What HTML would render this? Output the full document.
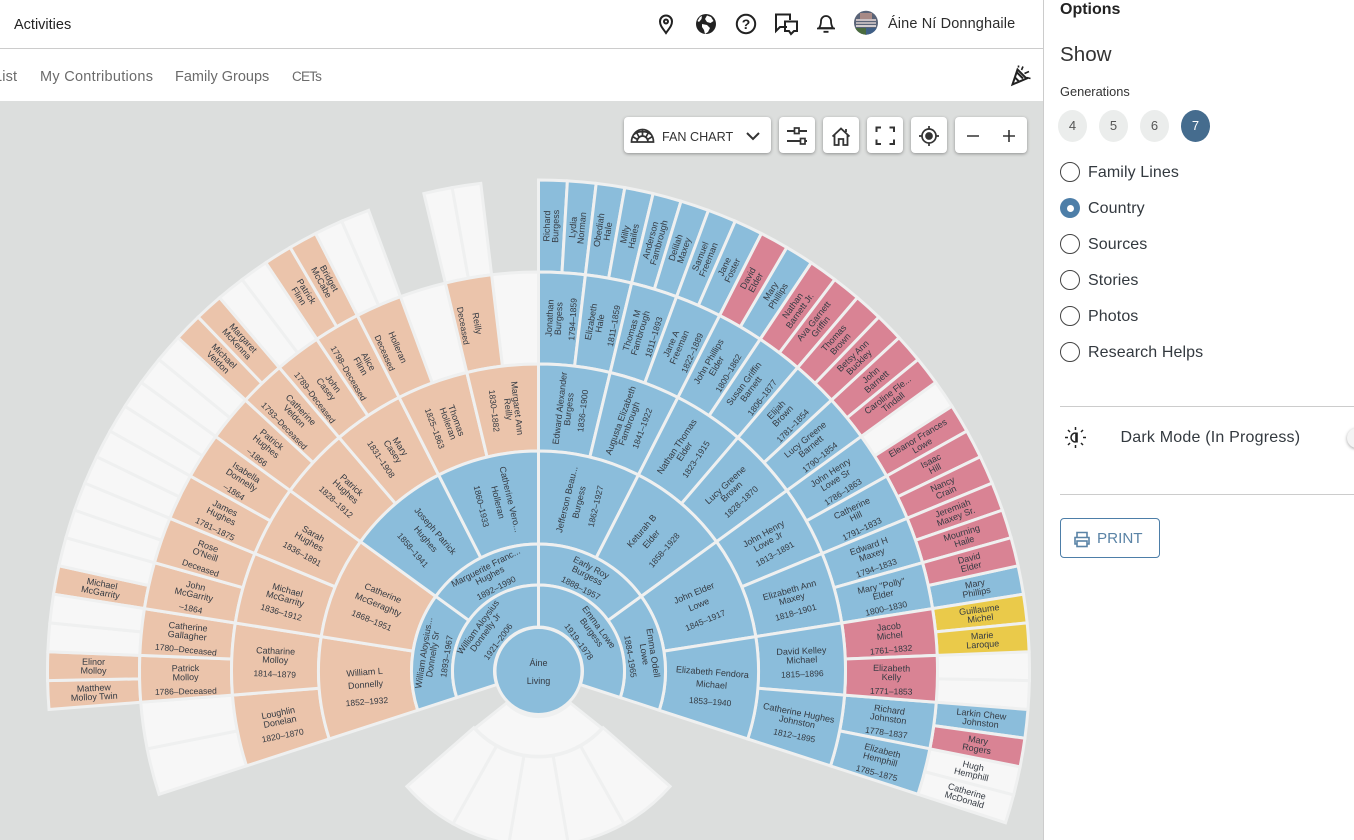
<!DOCTYPE html>
<html lang="en">
<head>
<meta charset="utf-8">
<title>Fan Chart</title>
<style>
html,body{margin:0;padding:0;width:1354px;height:840px;overflow:hidden;background:#fff;font-family:"Liberation Sans",sans-serif;color:#333}
.a{position:absolute;white-space:nowrap}
#chart{position:absolute;left:0;top:101px;width:1043px;height:739px;background:#dcdedd}
#fan{position:absolute;left:0;top:0}
#fan text{font-family:"Liberation Sans",sans-serif;font-size:9px;text-anchor:middle;fill:#343a42}
#fan .d{font-size:8.5px}
.b{fill:#8bbddb}.p{fill:#ebc4ab}.r{fill:#d98394}.y{fill:#eaca4a}.w{fill:#f7f7f7}
.btn{position:absolute;top:117px;height:36px;background:#fff;border-radius:4px;box-shadow:0 1px 3px rgba(0,0,0,.35)}
.radio{position:absolute;left:1060px;width:18px;height:18px;border:1.3px solid #444;border-radius:50%;background:#fff}
.rl{position:absolute;left:1088px;font-size:16px;letter-spacing:.1px;color:#33393f;white-space:nowrap}
.gen{position:absolute;top:110px;width:29px;height:32px;border-radius:50%;background:#ebedec;color:#555;font-size:13px;line-height:32px;text-align:center}
</style>
</head>
<body>
<!-- header -->
<div class="a" style="left:14px;top:17px;font-size:14.5px;color:#222">Activities</div>
<div class="a" style="left:0;top:48px;width:1043px;height:1px;background:#ccc"></div>
<div class="a" style="left:-6px;top:69px;font-size:14.5px;letter-spacing:.15px;color:#6b6b6b">List</div>
<div class="a" style="left:40px;top:69px;font-size:14.5px;letter-spacing:.28px;color:#6b6b6b">My Contributions</div>
<div class="a" style="left:175px;top:69px;font-size:14.5px;color:#6b6b6b">Family Groups</div>
<div class="a" style="left:292px;top:69px;font-size:13.5px;letter-spacing:-.8px;color:#6b6b6b">CETs</div>
<div class="a" style="left:888px;top:16px;font-size:14.5px;letter-spacing:.13px;color:#2c2c2c">Áine Ní Donnghaile</div>

<!-- chart area -->
<div id="chart"></div>
<svg id="fan" width="1043" height="840" viewBox="0 0 1043 840" xmlns="http://www.w3.org/2000/svg">
<rect x="0" y="101" width="1043" height="739" fill="#dcdedd"/>
<defs>
<path id="g1" d="M-35.6,-25.86L-69.57,-50.55A86 86 0 0 1 69.57,-50.55L35.6,-25.86A44 44 0 0 0 -35.6,-25.86Z"/>
<path id="g2" d="M-39.04,-76.63L-57.66,-113.16A127 127 0 0 1 57.66,-113.16L39.04,-76.63A86 86 0 0 0 -39.04,-76.63Z"/>
<path id="g3" d="M-29.65,-123.49L-51.36,-213.92A220 220 0 0 1 51.36,-213.92L29.65,-123.49A127 127 0 0 0 -29.65,-123.49Z"/>
<path id="g4" d="M-25.86,-218.48L-36.08,-304.87A307 307 0 0 1 36.08,-304.87L25.86,-218.48A220 220 0 0 0 -25.86,-218.48Z"/>
<path id="g5" d="M-18.07,-306.47L-23.49,-398.31A399 399 0 0 1 23.49,-398.31L18.07,-306.47A307 307 0 0 0 -18.07,-306.47Z"/>
<path id="g6" d="M-11.75,-398.83L-14.46,-490.79A491 491 0 0 1 14.46,-490.79L11.75,-398.83A399 399 0 0 0 -11.75,-398.83Z"/>
<path id="gb" d="M-14.56,-84.76L-29.64,-172.47A175 175 0 0 1 29.64,-172.47L14.56,-84.76A86 86 0 0 0 -14.56,-84.76Z"/>
</defs>
<g transform="translate(538.5,671)">
<g stroke="#eff0f0" stroke-width="3" stroke-linejoin="miter">
<!-- bottom blank fan -->
<g class="w">
<use href="#gb" transform="rotate(141)"/><use href="#gb" transform="rotate(160.5)"/><use href="#gb" transform="rotate(180)"/><use href="#gb" transform="rotate(199.5)"/><use href="#gb" transform="rotate(219)"/>
<path d="M-31.8,32L-63.5,57.3A86 86 0 0 0 63.5,57.3L31.8,32A44 44 0 0 1 -31.8,32Z"/>
</g>
<!-- generation 6 -->
<g class="p">
<use href="#g6" transform="rotate(-92.8125)"/><use href="#g6" transform="rotate(-89.4375)"/><use href="#g6" transform="rotate(-79.3125)"/><use href="#g6" transform="rotate(-45.5625)"/><use href="#g6" transform="rotate(-42.1875)"/><use href="#g6" transform="rotate(-32.0625)"/><use href="#g6" transform="rotate(-28.6875)"/>
</g>
<g class="w">
<use href="#g6" transform="rotate(-86.0625)"/><use href="#g6" transform="rotate(-82.6875)"/><use href="#g6" transform="rotate(-75.9375)"/><use href="#g6" transform="rotate(-72.5625)"/><use href="#g6" transform="rotate(-69.1875)"/><use href="#g6" transform="rotate(-65.8125)"/><use href="#g6" transform="rotate(-62.4375)"/><use href="#g6" transform="rotate(-59.0625)"/><use href="#g6" transform="rotate(-55.6875)"/><use href="#g6" transform="rotate(-52.3125)"/><use href="#g6" transform="rotate(-48.9375)"/><use href="#g6" transform="rotate(-38.8125)"/><use href="#g6" transform="rotate(-35.4375)"/><use href="#g6" transform="rotate(-25.3125)"/><use href="#g6" transform="rotate(-21.9375)"/><use href="#g6" transform="rotate(-11.8125)"/><use href="#g6" transform="rotate(-8.4375)"/>
<use href="#g6" transform="rotate(55.6875)"/><use href="#g6" transform="rotate(89.4375)"/><use href="#g6" transform="rotate(92.8125)"/><use href="#g6" transform="rotate(102.9375)"/><use href="#g6" transform="rotate(106.3125)"/>
</g>
<g class="b">
<use href="#g6" transform="rotate(1.6875)"/><use href="#g6" transform="rotate(5.0625)"/><use href="#g6" transform="rotate(8.4375)"/><use href="#g6" transform="rotate(11.8125)"/><use href="#g6" transform="rotate(15.1875)"/><use href="#g6" transform="rotate(18.5625)"/><use href="#g6" transform="rotate(21.9375)"/><use href="#g6" transform="rotate(25.3125)"/><use href="#g6" transform="rotate(32.0625)"/><use href="#g6" transform="rotate(79.3125)"/><use href="#g6" transform="rotate(96.1875)"/>
</g>
<g class="r">
<use href="#g6" transform="rotate(28.6875)"/><use href="#g6" transform="rotate(35.4375)"/><use href="#g6" transform="rotate(38.8125)"/><use href="#g6" transform="rotate(42.1875)"/><use href="#g6" transform="rotate(45.5625)"/><use href="#g6" transform="rotate(48.9375)"/><use href="#g6" transform="rotate(52.3125)"/><use href="#g6" transform="rotate(59.0625)"/><use href="#g6" transform="rotate(62.4375)"/><use href="#g6" transform="rotate(65.8125)"/><use href="#g6" transform="rotate(69.1875)"/><use href="#g6" transform="rotate(72.5625)"/><use href="#g6" transform="rotate(75.9375)"/><use href="#g6" transform="rotate(99.5625)"/>
</g>
<g class="y"><use href="#g6" transform="rotate(82.6875)"/><use href="#g6" transform="rotate(86.0625)"/></g>
<!-- generation 5 -->
<g class="w"><use href="#g5" transform="rotate(-104.625)"/><use href="#g5" transform="rotate(-97.875)"/><use href="#g5" transform="rotate(-16.875)"/><use href="#g5" transform="rotate(-3.375)"/></g>
<g class="p">
<use href="#g5" transform="rotate(-91.125)"/><use href="#g5" transform="rotate(-84.375)"/><use href="#g5" transform="rotate(-77.625)"/><use href="#g5" transform="rotate(-70.875)"/><use href="#g5" transform="rotate(-64.125)"/><use href="#g5" transform="rotate(-57.375)"/><use href="#g5" transform="rotate(-50.625)"/><use href="#g5" transform="rotate(-43.875)"/><use href="#g5" transform="rotate(-37.125)"/><use href="#g5" transform="rotate(-30.375)"/><use href="#g5" transform="rotate(-23.625)"/><use href="#g5" transform="rotate(-10.125)"/>
</g>
<g class="b">
<use href="#g5" transform="rotate(3.375)"/><use href="#g5" transform="rotate(10.125)"/><use href="#g5" transform="rotate(16.875)"/><use href="#g5" transform="rotate(23.625)"/><use href="#g5" transform="rotate(30.375)"/><use href="#g5" transform="rotate(37.125)"/><use href="#g5" transform="rotate(43.875)"/><use href="#g5" transform="rotate(50.625)"/><use href="#g5" transform="rotate(57.375)"/><use href="#g5" transform="rotate(64.125)"/><use href="#g5" transform="rotate(70.875)"/><use href="#g5" transform="rotate(77.625)"/><use href="#g5" transform="rotate(97.875)"/><use href="#g5" transform="rotate(104.625)"/>
</g>
<g class="r"><use href="#g5" transform="rotate(84.375)"/><use href="#g5" transform="rotate(91.125)"/></g>
<!-- generation 4 -->
<g class="p">
<use href="#g4" transform="rotate(-101.25)"/><use href="#g4" transform="rotate(-87.75)"/><use href="#g4" transform="rotate(-74.25)"/><use href="#g4" transform="rotate(-60.75)"/><use href="#g4" transform="rotate(-47.25)"/><use href="#g4" transform="rotate(-33.75)"/><use href="#g4" transform="rotate(-20.25)"/><use href="#g4" transform="rotate(-6.75)"/>
</g>
<g class="b">
<use href="#g4" transform="rotate(6.75)"/><use href="#g4" transform="rotate(20.25)"/><use href="#g4" transform="rotate(33.75)"/><use href="#g4" transform="rotate(47.25)"/><use href="#g4" transform="rotate(60.75)"/><use href="#g4" transform="rotate(74.25)"/><use href="#g4" transform="rotate(87.75)"/><use href="#g4" transform="rotate(101.25)"/>
</g>
<!-- generation 3 -->
<g class="p"><use href="#g3" transform="rotate(-94.5)"/><use href="#g3" transform="rotate(-67.5)"/></g>
<g class="b"><use href="#g3" transform="rotate(-40.5)"/><use href="#g3" transform="rotate(-13.5)"/><use href="#g3" transform="rotate(13.5)"/><use href="#g3" transform="rotate(40.5)"/><use href="#g3" transform="rotate(67.5)"/><use href="#g3" transform="rotate(94.5)"/></g>
<!-- generations 2 and 1 -->
<g class="b">
<use href="#g2" transform="rotate(-81)"/><use href="#g2" transform="rotate(-27)"/><use href="#g2" transform="rotate(27)"/><use href="#g2" transform="rotate(81)"/>
<use href="#g1" transform="rotate(-54)"/><use href="#g1" transform="rotate(54)"/>
<circle r="43.5"/>
</g>
</g>
<!-- text: center -->
<text y="-5">Áine</text><text y="13">Living</text>
<!-- gen 1 -->
<text transform="rotate(-54) translate(0,-65)"><tspan x="0" y="-6.7">William Aloysius</tspan><tspan x="0" y="2.3">Donnelly Jr</tspan><tspan x="0" y="18" class="d">1921–2006</tspan></text>
<text transform="rotate(54) translate(0,-65)"><tspan x="0" y="-6.7">Emma Lowe</tspan><tspan x="0" y="2.3">Burgess</tspan><tspan x="0" y="18" class="d">1919–1978</tspan></text>
<!-- gen 2 -->
<text transform="rotate(-81) translate(0,-106.5)"><tspan x="0" y="-6.7">William Aloysius...</tspan><tspan x="0" y="2.3">Donnelly Sr</tspan><tspan x="0" y="16.3" class="d">1893–1967</tspan></text>
<text transform="rotate(-27) translate(0,-106.5)"><tspan x="0" y="-6.7">Marguerite Franc...</tspan><tspan x="0" y="2.3">Hughes</tspan><tspan x="0" y="16.3" class="d">1892–1990</tspan></text>
<text transform="rotate(27) translate(0,-106.5)"><tspan x="0" y="-6.7">Early Roy</tspan><tspan x="0" y="2.3">Burgess</tspan><tspan x="0" y="16.3" class="d">1888–1957</tspan></text>
<text transform="rotate(81) translate(0,-106.5)"><tspan x="0" y="-6.7">Emma Odell</tspan><tspan x="0" y="2.3">Lowe</tspan><tspan x="0" y="16.3" class="d">1884–1965</tspan></text>
<!-- gen 3 -->
<text transform="rotate(-94.5) translate(0,-173.5) rotate(90)"><tspan x="0" y="-9.5">William L</tspan><tspan x="0" y="3">Donnelly</tspan><tspan x="0" y="20" class="d">1852–1932</tspan></text>
<text transform="rotate(-67.5) translate(0,-173.5) rotate(90)"><tspan x="0" y="-9.5">Catherine</tspan><tspan x="0" y="3">McGeraghty</tspan><tspan x="0" y="20" class="d">1868–1951</tspan></text>
<text transform="rotate(-40.5) translate(0,-173.5) rotate(90)"><tspan x="0" y="-9.5">Joseph Patrick</tspan><tspan x="0" y="3">Hughes</tspan><tspan x="0" y="20" class="d">1858–1941</tspan></text>
<text transform="rotate(-13.5) translate(0,-173.5) rotate(90)"><tspan x="0" y="-9.5">Catherine Vero...</tspan><tspan x="0" y="3">Holleran</tspan><tspan x="0" y="20" class="d">1860–1933</tspan></text>
<text transform="rotate(13.5) translate(0,-173.5) rotate(-90)"><tspan x="0" y="-9.5">Jefferson Beau...</tspan><tspan x="0" y="3">Burgess</tspan><tspan x="0" y="20" class="d">1862–1927</tspan></text>
<text transform="rotate(40.5) translate(0,-173.5) rotate(-90)"><tspan x="0" y="-9.5">Keturah B</tspan><tspan x="0" y="3">Elder</tspan><tspan x="0" y="20" class="d">1858–1928</tspan></text>
<text transform="rotate(67.5) translate(0,-173.5) rotate(-90)"><tspan x="0" y="-9.5">John Elder</tspan><tspan x="0" y="3">Lowe</tspan><tspan x="0" y="20" class="d">1845–1917</tspan></text>
<text transform="rotate(94.5) translate(0,-173.5) rotate(-90)"><tspan x="0" y="-9.5">Elizabeth Fendora</tspan><tspan x="0" y="3">Michael</tspan><tspan x="0" y="20" class="d">1853–1940</tspan></text>
<!-- gen 4 -->
<text transform="rotate(-101.25) translate(0,-263.5) rotate(90)"><tspan x="0" y="-6.7">Loughlin</tspan><tspan x="0" y="2.3">Donelan</tspan><tspan x="0" y="16.3" class="d">1820–1870</tspan></text>
<text transform="rotate(-87.75) translate(0,-263.5) rotate(90)"><tspan x="0" y="-6.7">Catharine</tspan><tspan x="0" y="2.3">Molloy</tspan><tspan x="0" y="16.3" class="d">1814–1879</tspan></text>
<text transform="rotate(-74.25) translate(0,-263.5) rotate(90)"><tspan x="0" y="-6.7">Michael</tspan><tspan x="0" y="2.3">McGarrity</tspan><tspan x="0" y="16.3" class="d">1836–1912</tspan></text>
<text transform="rotate(-60.75) translate(0,-263.5) rotate(90)"><tspan x="0" y="-6.7">Sarah</tspan><tspan x="0" y="2.3">Hughes</tspan><tspan x="0" y="16.3" class="d">1836–1891</tspan></text>
<text transform="rotate(-47.25) translate(0,-263.5) rotate(90)"><tspan x="0" y="-6.7">Patrick</tspan><tspan x="0" y="2.3">Hughes</tspan><tspan x="0" y="16.3" class="d">1828–1912</tspan></text>
<text transform="rotate(-33.75) translate(0,-263.5) rotate(90)"><tspan x="0" y="-6.7">Mary</tspan><tspan x="0" y="2.3">Casey</tspan><tspan x="0" y="16.3" class="d">1831–1908</tspan></text>
<text transform="rotate(-20.25) translate(0,-263.5) rotate(90)"><tspan x="0" y="-6.7">Thomas</tspan><tspan x="0" y="2.3">Holleran</tspan><tspan x="0" y="16.3" class="d">1825–1863</tspan></text>
<text transform="rotate(-6.75) translate(0,-263.5) rotate(90)"><tspan x="0" y="-6.7">Margaret Ann</tspan><tspan x="0" y="2.3">Reilly</tspan><tspan x="0" y="16.3" class="d">1830–1882</tspan></text>
<text transform="rotate(6.75) translate(0,-263.5) rotate(-90)"><tspan x="0" y="-6.7">Edward Alexander</tspan><tspan x="0" y="2.3">Burgess</tspan><tspan x="0" y="16.3" class="d">1836–1900</tspan></text>
<text transform="rotate(20.25) translate(0,-263.5) rotate(-90)"><tspan x="0" y="-6.7">Augusta Elizabeth</tspan><tspan x="0" y="2.3">Fambrough</tspan><tspan x="0" y="16.3" class="d">1841–1922</tspan></text>
<text transform="rotate(33.75) translate(0,-263.5) rotate(-90)"><tspan x="0" y="-6.7">Nathan Thomas</tspan><tspan x="0" y="2.3">Elder</tspan><tspan x="0" y="16.3" class="d">1823–1915</tspan></text>
<text transform="rotate(47.25) translate(0,-263.5) rotate(-90)"><tspan x="0" y="-6.7">Lucy Greene</tspan><tspan x="0" y="2.3">Brown</tspan><tspan x="0" y="16.3" class="d">1828–1870</tspan></text>
<text transform="rotate(60.75) translate(0,-263.5) rotate(-90)"><tspan x="0" y="-6.7">John Henry</tspan><tspan x="0" y="2.3">Lowe Jr</tspan><tspan x="0" y="16.3" class="d">1813–1891</tspan></text>
<text transform="rotate(74.25) translate(0,-263.5) rotate(-90)"><tspan x="0" y="-6.7">Elizabeth Ann</tspan><tspan x="0" y="2.3">Maxey</tspan><tspan x="0" y="16.3" class="d">1818–1901</tspan></text>
<text transform="rotate(87.75) translate(0,-263.5) rotate(-90)"><tspan x="0" y="-6.7">David Kelley</tspan><tspan x="0" y="2.3">Michael</tspan><tspan x="0" y="16.3" class="d">1815–1896</tspan></text>
<text transform="rotate(101.25) translate(0,-263.5) rotate(-90)"><tspan x="0" y="-6.7">Catherine Hughes</tspan><tspan x="0" y="2.3">Johnston</tspan><tspan x="0" y="16.3" class="d">1812–1895</tspan></text>
<!-- gen 5 -->
<text transform="rotate(-91.125) translate(0,-353) rotate(90)"><tspan x="0" y="-6.7">Patrick</tspan><tspan x="0" y="2.3">Molloy</tspan><tspan x="0" y="16.3" class="d">1786–Deceased</tspan></text>
<text transform="rotate(-84.375) translate(0,-353) rotate(90)"><tspan x="0" y="-6.7">Catherine</tspan><tspan x="0" y="2.3">Gallagher</tspan><tspan x="0" y="16.3" class="d">1780–Deceased</tspan></text>
<text transform="rotate(-77.625) translate(0,-353) rotate(90)"><tspan x="0" y="-6.7">John</tspan><tspan x="0" y="2.3">McGarrity</tspan><tspan x="0" y="16.3" class="d">–1864</tspan></text>
<text transform="rotate(-70.875) translate(0,-353) rotate(90)"><tspan x="0" y="-6.7">Rose</tspan><tspan x="0" y="2.3">O'Neill</tspan><tspan x="0" y="16.3" class="d">Deceased</tspan></text>
<text transform="rotate(-64.125) translate(0,-353) rotate(90)"><tspan x="0" y="-6.7">James</tspan><tspan x="0" y="2.3">Hughes</tspan><tspan x="0" y="16.3" class="d">1781–1875</tspan></text>
<text transform="rotate(-57.375) translate(0,-353) rotate(90)"><tspan x="0" y="-6.7">Isabella</tspan><tspan x="0" y="2.3">Donnelly</tspan><tspan x="0" y="16.3" class="d">–1864</tspan></text>
<text transform="rotate(-50.625) translate(0,-353) rotate(90)"><tspan x="0" y="-6.7">Patrick</tspan><tspan x="0" y="2.3">Hughes</tspan><tspan x="0" y="16.3" class="d">–1866</tspan></text>
<text transform="rotate(-43.875) translate(0,-353) rotate(90)"><tspan x="0" y="-6.7">Catherine</tspan><tspan x="0" y="2.3">Veldon</tspan><tspan x="0" y="16.3" class="d">1793–Deceased</tspan></text>
<text transform="rotate(-37.125) translate(0,-353) rotate(90)"><tspan x="0" y="-6.7">John</tspan><tspan x="0" y="2.3">Casey</tspan><tspan x="0" y="16.3" class="d">1789–Deceased</tspan></text>
<text transform="rotate(-30.375) translate(0,-353) rotate(90)"><tspan x="0" y="-6.7">Alice</tspan><tspan x="0" y="2.3">Flinn</tspan><tspan x="0" y="16.3" class="d">1798–Deceased</tspan></text>
<text transform="rotate(-23.625) translate(0,-353) rotate(90)"><tspan x="0" y="2.3">Holleran</tspan><tspan x="0" y="16.3" class="d">Deceased</tspan></text>
<text transform="rotate(-10.125) translate(0,-353) rotate(90)"><tspan x="0" y="2.3">Reilly</tspan><tspan x="0" y="16.3" class="d">Deceased</tspan></text>
<text transform="rotate(3.375) translate(0,-353) rotate(-90)"><tspan x="0" y="-6.7">Jonathan</tspan><tspan x="0" y="2.3">Burgess</tspan><tspan x="0" y="16.3" class="d">1794–1859</tspan></text>
<text transform="rotate(10.125) translate(0,-353) rotate(-90)"><tspan x="0" y="-6.7">Elizabeth</tspan><tspan x="0" y="2.3">Hale</tspan><tspan x="0" y="16.3" class="d">1811–1859</tspan></text>
<text transform="rotate(16.875) translate(0,-353) rotate(-90)"><tspan x="0" y="-6.7">Thomas M</tspan><tspan x="0" y="2.3">Fambrough</tspan><tspan x="0" y="16.3" class="d">1811–1893</tspan></text>
<text transform="rotate(23.625) translate(0,-353) rotate(-90)"><tspan x="0" y="-6.7">Jane A</tspan><tspan x="0" y="2.3">Freeman</tspan><tspan x="0" y="16.3" class="d">1822–1889</tspan></text>
<text transform="rotate(30.375) translate(0,-353) rotate(-90)"><tspan x="0" y="-6.7">John Phillips</tspan><tspan x="0" y="2.3">Elder</tspan><tspan x="0" y="16.3" class="d">1800–1862</tspan></text>
<text transform="rotate(37.125) translate(0,-353) rotate(-90)"><tspan x="0" y="-6.7">Susan Griffin</tspan><tspan x="0" y="2.3">Barnett</tspan><tspan x="0" y="16.3" class="d">1806–1877</tspan></text>
<text transform="rotate(43.875) translate(0,-353) rotate(-90)"><tspan x="0" y="-6.7">Elijah</tspan><tspan x="0" y="2.3">Brown</tspan><tspan x="0" y="16.3" class="d">1781–1854</tspan></text>
<text transform="rotate(50.625) translate(0,-353) rotate(-90)"><tspan x="0" y="-6.7">Lucy Greene</tspan><tspan x="0" y="2.3">Barnett</tspan><tspan x="0" y="16.3" class="d">1790–1854</tspan></text>
<text transform="rotate(57.375) translate(0,-353) rotate(-90)"><tspan x="0" y="-6.7">John Henry</tspan><tspan x="0" y="2.3">Lowe Sr</tspan><tspan x="0" y="16.3" class="d">1786–1863</tspan></text>
<text transform="rotate(64.125) translate(0,-353) rotate(-90)"><tspan x="0" y="-6.7">Catherine</tspan><tspan x="0" y="2.3">Hill</tspan><tspan x="0" y="16.3" class="d">1791–1833</tspan></text>
<text transform="rotate(70.875) translate(0,-353) rotate(-90)"><tspan x="0" y="-6.7">Edward H</tspan><tspan x="0" y="2.3">Maxey</tspan><tspan x="0" y="16.3" class="d">1794–1833</tspan></text>
<text transform="rotate(77.625) translate(0,-353) rotate(-90)"><tspan x="0" y="-6.7">Mary "Polly"</tspan><tspan x="0" y="2.3">Elder</tspan><tspan x="0" y="16.3" class="d">1800–1830</tspan></text>
<text transform="rotate(84.375) translate(0,-353) rotate(-90)"><tspan x="0" y="-6.7">Jacob</tspan><tspan x="0" y="2.3">Michel</tspan><tspan x="0" y="16.3" class="d">1761–1832</tspan></text>
<text transform="rotate(91.125) translate(0,-353) rotate(-90)"><tspan x="0" y="-6.7">Elizabeth</tspan><tspan x="0" y="2.3">Kelly</tspan><tspan x="0" y="16.3" class="d">1771–1853</tspan></text>
<text transform="rotate(97.875) translate(0,-353) rotate(-90)"><tspan x="0" y="-6.7">Richard</tspan><tspan x="0" y="2.3">Johnston</tspan><tspan x="0" y="16.3" class="d">1778–1837</tspan></text>
<text transform="rotate(104.625) translate(0,-353) rotate(-90)"><tspan x="0" y="-6.7">Elizabeth</tspan><tspan x="0" y="2.3">Hemphill</tspan><tspan x="0" y="16.3" class="d">1785–1875</tspan></text>
<!-- gen 6 -->
<text transform="rotate(-92.8125) translate(0,-445) rotate(90)"><tspan x="0" y="-1.8">Matthew</tspan><tspan x="0" y="7">Molloy Twin</tspan></text>
<text transform="rotate(-89.4375) translate(0,-445) rotate(90)"><tspan x="0" y="-1.8">Elinor</tspan><tspan x="0" y="7">Molloy</tspan></text>
<text transform="rotate(-79.3125) translate(0,-445) rotate(90)"><tspan x="0" y="-1.8">Michael</tspan><tspan x="0" y="7">McGarrity</tspan></text>
<text transform="rotate(-45.5625) translate(0,-445) rotate(90)"><tspan x="0" y="-1.8">Michael</tspan><tspan x="0" y="7">Veldon</tspan></text>
<text transform="rotate(-42.1875) translate(0,-445) rotate(90)"><tspan x="0" y="-1.8">Margaret</tspan><tspan x="0" y="7">McKenna</tspan></text>
<text transform="rotate(-32.0625) translate(0,-445) rotate(90)"><tspan x="0" y="-1.8">Patrick</tspan><tspan x="0" y="7">Flinn</tspan></text>
<text transform="rotate(-28.6875) translate(0,-445) rotate(90)"><tspan x="0" y="-1.8">Bridget</tspan><tspan x="0" y="7">McCabe</tspan></text>
<text transform="rotate(1.6875) translate(0,-445) rotate(-90)"><tspan x="0" y="-1.8">Richard</tspan><tspan x="0" y="7">Burgess</tspan></text>
<text transform="rotate(5.0625) translate(0,-445) rotate(-90)"><tspan x="0" y="-1.8">Lydia</tspan><tspan x="0" y="7">Norman</tspan></text>
<text transform="rotate(8.4375) translate(0,-445) rotate(-90)"><tspan x="0" y="-1.8">Obediah</tspan><tspan x="0" y="7">Hale</tspan></text>
<text transform="rotate(11.8125) translate(0,-445) rotate(-90)"><tspan x="0" y="-1.8">Milly</tspan><tspan x="0" y="7">Hailes</tspan></text>
<text transform="rotate(15.1875) translate(0,-445) rotate(-90)"><tspan x="0" y="-1.8">Anderson</tspan><tspan x="0" y="7">Fambrough</tspan></text>
<text transform="rotate(18.5625) translate(0,-445) rotate(-90)"><tspan x="0" y="-1.8">Delilah</tspan><tspan x="0" y="7">Maxey</tspan></text>
<text transform="rotate(21.9375) translate(0,-445) rotate(-90)"><tspan x="0" y="-1.8">Samuel</tspan><tspan x="0" y="7">Freeman</tspan></text>
<text transform="rotate(25.3125) translate(0,-445) rotate(-90)"><tspan x="0" y="-1.8">Jane</tspan><tspan x="0" y="7">Foster</tspan></text>
<text transform="rotate(28.6875) translate(0,-445) rotate(-90)"><tspan x="0" y="-1.8">David</tspan><tspan x="0" y="7">Elder</tspan></text>
<text transform="rotate(32.0625) translate(0,-445) rotate(-90)"><tspan x="0" y="-1.8">Mary</tspan><tspan x="0" y="7">Phillips</tspan></text>
<text transform="rotate(35.4375) translate(0,-445) rotate(-90)"><tspan x="0" y="-1.8">Nathan</tspan><tspan x="0" y="7">Barnett Jr.</tspan></text>
<text transform="rotate(38.8125) translate(0,-445) rotate(-90)"><tspan x="0" y="-1.8">Ava Garnett</tspan><tspan x="0" y="7">Griffin</tspan></text>
<text transform="rotate(42.1875) translate(0,-445) rotate(-90)"><tspan x="0" y="-1.8">Thomas</tspan><tspan x="0" y="7">Brown</tspan></text>
<text transform="rotate(45.5625) translate(0,-445) rotate(-90)"><tspan x="0" y="-1.8">Betsy Ann</tspan><tspan x="0" y="7">Buckley</tspan></text>
<text transform="rotate(48.9375) translate(0,-445) rotate(-90)"><tspan x="0" y="-1.8">John</tspan><tspan x="0" y="7">Barnett</tspan></text>
<text transform="rotate(52.3125) translate(0,-445) rotate(-90)"><tspan x="0" y="-1.8">Caroline Fle...</tspan><tspan x="0" y="7">Tindall</tspan></text>
<text transform="rotate(59.0625) translate(0,-445) rotate(-90)"><tspan x="0" y="-1.8">Eleanor Frances</tspan><tspan x="0" y="7">Lowe</tspan></text>
<text transform="rotate(62.4375) translate(0,-445) rotate(-90)"><tspan x="0" y="-1.8">Isaac</tspan><tspan x="0" y="7">Hill</tspan></text>
<text transform="rotate(65.8125) translate(0,-445) rotate(-90)"><tspan x="0" y="-1.8">Nancy</tspan><tspan x="0" y="7">Crain</tspan></text>
<text transform="rotate(69.1875) translate(0,-445) rotate(-90)"><tspan x="0" y="-1.8">Jeremiah</tspan><tspan x="0" y="7">Maxey Sr.</tspan></text>
<text transform="rotate(72.5625) translate(0,-445) rotate(-90)"><tspan x="0" y="-1.8">Mourning</tspan><tspan x="0" y="7">Haile</tspan></text>
<text transform="rotate(75.9375) translate(0,-445) rotate(-90)"><tspan x="0" y="-1.8">David</tspan><tspan x="0" y="7">Elder</tspan></text>
<text transform="rotate(79.3125) translate(0,-445) rotate(-90)"><tspan x="0" y="-1.8">Mary</tspan><tspan x="0" y="7">Phillips</tspan></text>
<text transform="rotate(82.6875) translate(0,-445) rotate(-90)"><tspan x="0" y="-1.8">Guillaume</tspan><tspan x="0" y="7">Michel</tspan></text>
<text transform="rotate(86.0625) translate(0,-445) rotate(-90)"><tspan x="0" y="-1.8">Marie</tspan><tspan x="0" y="7">Laroque</tspan></text>
<text transform="rotate(96.1875) translate(0,-445) rotate(-90)"><tspan x="0" y="-1.8">Larkin Chew</tspan><tspan x="0" y="7">Johnston</tspan></text>
<text transform="rotate(99.5625) translate(0,-445) rotate(-90)"><tspan x="0" y="-1.8">Mary</tspan><tspan x="0" y="7">Rogers</tspan></text>
<text transform="rotate(102.9375) translate(0,-445) rotate(-90)"><tspan x="0" y="-1.8">Hugh</tspan><tspan x="0" y="7">Hemphill</tspan></text>
<text transform="rotate(106.3125) translate(0,-445) rotate(-90)"><tspan x="0" y="-1.8">Catherine</tspan><tspan x="0" y="7">McDonald</tspan></text>
</g>
</svg>

<!-- toolbar -->
<div class="btn" style="left:624px;width:147px"></div>
<div class="btn" style="left:779px;width:36px"></div>
<div class="btn" style="left:823px;width:36px"></div>
<div class="btn" style="left:867px;width:36px"></div>
<div class="btn" style="left:911px;width:36px"></div>
<div class="btn" style="left:955px;width:72px"></div>
<div class="a" style="left:662px;top:130px;font-size:12.6px;color:#333">FAN CHART</div>

<!-- right panel -->
<div class="a" style="left:1043px;top:0;width:311px;height:840px;background:#fff;border-left:1px solid #ccc;box-sizing:border-box"></div>
<div class="a" style="left:1060px;top:1px;font-size:16px;font-weight:bold;color:#222">Options</div>
<div class="a" style="left:1060px;top:43px;font-size:20.6px;color:#333">Show</div>
<div class="a" style="left:1060px;top:84px;font-size:12.8px;color:#333">Generations</div>
<div class="gen" style="left:1058px">4</div>
<div class="gen" style="left:1099px">5</div>
<div class="gen" style="left:1140px">6</div>
<div class="gen" style="left:1181px;background:#456c8e;color:#fff">7</div>
<div class="radio" style="top:162px"></div><div class="rl" style="top:164px">Family Lines</div>
<div class="radio" style="top:198px;width:20px;height:20px;border:0;background:#4d7ea8"></div>
<div class="a" style="left:1066.5px;top:204.5px;width:7px;height:7px;border-radius:50%;background:#fff"></div>
<div class="rl" style="top:200px">Country</div>
<div class="radio" style="top:234px"></div><div class="rl" style="top:236px">Sources</div>
<div class="radio" style="top:270px"></div><div class="rl" style="top:272px">Stories</div>
<div class="radio" style="top:306px"></div><div class="rl" style="top:308px">Photos</div>
<div class="radio" style="top:342px"></div><div class="rl" style="top:344px">Research Helps</div>
<div class="a" style="left:1060px;top:406px;width:294px;height:1px;background:#ccc"></div>
<div class="a" style="left:1120.5px;top:429px;font-size:16px;letter-spacing:.2px;color:#33393f">Dark Mode (In Progress)</div>
<div class="a" style="left:1347px;top:428px;width:20px;height:20px;border-radius:50%;background:#f4f4f4;box-shadow:0 1px 3px rgba(0,0,0,.35)"></div>
<div class="a" style="left:1060px;top:494px;width:294px;height:1px;background:#ccc"></div>
<div class="a" style="left:1060px;top:518px;width:100px;height:40px;box-sizing:border-box;border:1px solid #4d7ea8;border-radius:4px;background:#fff"></div>
<div class="a" style="left:1097px;top:530px;font-size:15.2px;color:#5a83a6">PRINT</div>

<!-- icons -->
<svg class="a" style="left:0;top:0" width="1354" height="600" viewBox="0 0 1354 600" fill="none" stroke="#222" stroke-width="2">
<!-- avatar -->
<defs><clipPath id="av"><circle cx="866" cy="22.700" r="12"/></clipPath></defs>
<g clip-path="url(#av)" stroke="none">
<rect x="854" y="10" width="24" height="25" fill="#5a6478"/>
<rect x="860" y="13" width="12" height="6" fill="#a88a86"/>
<rect x="856" y="19" width="20" height="2" fill="#c9bfc2"/>
<rect x="856" y="22" width="20" height="2" fill="#b9b3b8"/>
<rect x="856" y="25" width="20" height="2" fill="#d3cdcf"/>
<rect x="854" y="28" width="12" height="7" fill="#4a6b3f"/>
<rect x="866" y="28" width="12" height="7" fill="#3f5f86"/>
</g>
<path d="M666 33C662.5 28 660 25.5 660 21.5A6 6 0 0 1 672 21.5C672 25.5 669.500 28 666 33Z"/>
<circle cx="666" cy="21.500" r="2"/>
<circle cx="706" cy="24" r="10" fill="#222" stroke="none"/>
<path d="M707 15.500l4 1.500 2.500 4-3 2-3.500-1-2-3zM702 24l5 1 3 3-2 4-3 2-1-4-2-3zM697.500 21l2.500-4 2-1-.5 3-2.500 3z" fill="#fff" stroke="none"/>
<circle cx="746" cy="24" r="9.200"/>
<text x="746" y="29" font-family="Liberation Sans,sans-serif" font-size="14" font-weight="bold" fill="#222" stroke="none" text-anchor="middle">?</text>
<path d="M787 27H780L776 31V14.500H790V20"/>
<path d="M785 21.500H797V31H794L791 34L789 31H785Z"/>
<path d="M819 28C820.500 26 821 24 821 21A5 5 0 0 1 831 21C831 24 831.500 26 833 28Z" stroke-width="1.800"/>
<path d="M817 28.500H835M823.500 31.800H828.500" stroke-width="1.800"/>
<!-- toolbar icons -->
<g stroke="#333" stroke-width="1.700">
<path d="M631.500 142A11 12.500 0 0 1 653.500 142ZM637 142A5.500 6 0 0 1 648 142M642.500 129.500V136M636 131.500L639 137M649 131.500L646 137M632.500 136.500L637.500 139.500M652.500 136.500L647.500 139.500M634 134.500A10 6 0 0 1 651 134.500"/>
<path d="M747 133L753 139L759 133" stroke-width="2"/>
<path d="M787 131H807M787 141H807" stroke-width="2"/>
<rect x="794.500" y="128" width="4.500" height="5.500" fill="#fff"/>
<rect x="800.500" y="138.500" width="4.500" height="5.500" fill="#fff"/>
<path d="M832.500 136.500L841 128.500L849.500 136.500M834.500 135V145H838.700V139H843.300V145H847.500V135M846 132V129" stroke-width="1.800"/>
<path d="M876.500 132V127.500H881M889.500 127.500H894V132M894 139.500V144H889.500M881 144H876.500V139.500" stroke-width="2"/>
<circle cx="929" cy="136" r="7"/>
<circle cx="929" cy="136" r="3" fill="#333"/>
<path d="M929 126V129M929 143V146M919 136H922M936 136H939"/>
<path d="M967 136H979M1003 136H1015M1009 130V142" stroke-width="1.600"/>
<!-- party popper -->
<path d="M1012.500 84.500L1017.500 69.500L1026.500 78.500ZM1015 77.500L1019.500 82M1017 72.500L1023 78.500" stroke="#222" stroke-width="2"/>
<path d="M1021.500 70L1023 66.500M1024.500 73.500L1029 71.500M1026.500 77.500L1030.500 78.500M1018.500 65.500L1018.500 67.500" stroke="#222" stroke-width="1.600"/>
</g>
<!-- sun -->
<g stroke="#222" stroke-width="1.500">
<path d="M1075.500 433A4.500 4.500 0 0 0 1075.500 442" />
<path d="M1076.500 432.500V442.500" stroke-width="2.600"/>
<path d="M1075.500 427V430M1075.500 445V448M1065 437.500H1068M1083 437.500H1086M1068 430L1070 432M1081 443L1083 445M1068 445L1070 443M1081 432L1083 430"/>
</g>
<!-- printer -->
<g stroke="#5a83a6" stroke-width="1.600">
<path d="M1077 537V532.500H1087V537M1077 544H1075V537.500H1089V544H1087"/>
<rect x="1077" y="541" width="10" height="5.500"/>
</g>
</svg>
</body>
</html>
